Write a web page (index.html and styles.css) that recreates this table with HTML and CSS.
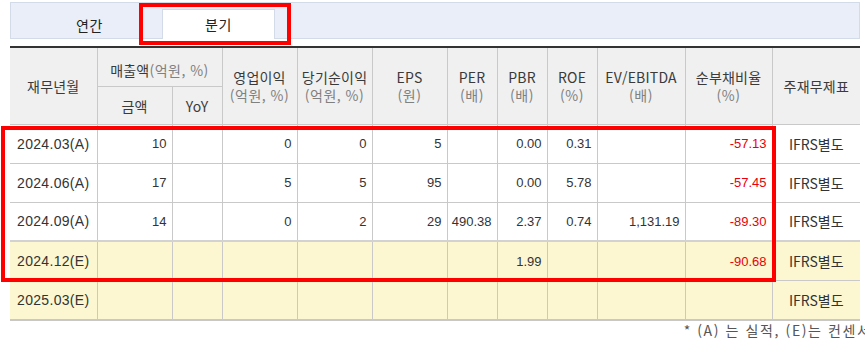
FILE: index.html
```html
<!DOCTYPE html>
<html lang="ko">
<head>
<meta charset="utf-8">
<title>재무 요약</title>
<link rel="stylesheet" href="styles.css">
</head>
<body>
<div class="page">
  <div class="tabs">
    <div class="tab">연간</div>
    <div class="tab active">분기</div>
  </div>
  <table class="fin">
    <colgroup>
      <col class="c87"><col class="c75"><col class="c50"><col class="c75"><col class="c75"><col class="c75">
      <col class="c50"><col class="c50"><col class="c50"><col class="c88"><col class="c87"><col class="c88">
    </colgroup>
    <thead>
      <tr class="h1">
        <th rowspan="2">재무년월</th>
        <th colspan="2" class="grp">매출액<span class="unit">(억원, %)</span></th>
        <th rowspan="2">영업이익<br><span class="unit">(억원, %)</span></th>
        <th rowspan="2">당기순이익<br><span class="unit">(억원, %)</span></th>
        <th rowspan="2">EPS<br><span class="unit">(원)</span></th>
        <th rowspan="2">PER<br><span class="unit">(배)</span></th>
        <th rowspan="2">PBR<br><span class="unit">(배)</span></th>
        <th rowspan="2">ROE<br><span class="unit">(%)</span></th>
        <th rowspan="2">EV/EBITDA<br><span class="unit">(배)</span></th>
        <th rowspan="2">순부채비율<br><span class="unit">(%)</span></th>
        <th rowspan="2">주재무제표</th>
      </tr>
      <tr class="h2">
        <th>금액</th>
        <th>YoY</th>
      </tr>
    </thead>
    <tbody>
      <tr>
        <td class="date">2024.03(A)</td><td>10</td><td></td><td>0</td><td>0</td><td>5</td>
        <td></td><td>0.00</td><td>0.31</td><td></td><td class="neg">-57.13</td><td class="std">IFRS별도</td>
      </tr>
      <tr>
        <td class="date">2024.06(A)</td><td>17</td><td></td><td>5</td><td>5</td><td>95</td>
        <td></td><td>0.00</td><td>5.78</td><td></td><td class="neg">-57.45</td><td class="std">IFRS별도</td>
      </tr>
      <tr>
        <td class="date">2024.09(A)</td><td>14</td><td></td><td>0</td><td>2</td><td>29</td>
        <td>490.38</td><td>2.37</td><td>0.74</td><td>1,131.19</td><td class="neg">-89.30</td><td class="std">IFRS별도</td>
      </tr>
      <tr class="est first">
        <td class="date">2024.12(E)</td><td></td><td></td><td></td><td></td><td></td>
        <td></td><td>1.99</td><td></td><td></td><td class="neg">-90.68</td><td class="std">IFRS별도</td>
      </tr>
      <tr class="est last">
        <td class="date">2025.03(E)</td><td></td><td></td><td></td><td></td><td></td>
        <td></td><td></td><td></td><td></td><td></td><td class="std">IFRS별도</td>
      </tr>
    </tbody>
  </table>
  <div class="note"><span>* (A) 는 실적, (E)는 컨센서스</span></div>
</div>
<div class="mark mark-tab"></div>
<div class="mark mark-rows"></div>
</body>
</html>
```
FILE: styles.css
```css
html, body {
  margin: 0;
  padding: 0;
  background: #fff;
  overflow: hidden;
}
body {
  width: 865px;
  height: 342px;
  position: relative;
  font-family: "Noto Sans CJK KR", "Liberation Sans", sans-serif;
  color: #333;
}
.page {
  width: 850px;
  padding: 2px 0 0 10px;
}
.tabs {
  display: flex;
  align-items: flex-end;
  height: 35px;
  background: #e9eef8;
  border: 1px solid #d4dbe8;
  box-sizing: content-box;
  padding-left: 22px;
  gap: 16px;
}
.tab {
  width: 113px;
  height: 28px;
  display: flex;
  align-items: center;
  justify-content: center;
  font-size: 14px;
  color: #222;
  letter-spacing: 0.5px;
  box-sizing: border-box;
  margin-bottom: -1px;
  padding-bottom: 1px;
}
.tab.active {
  background: #fff;
  border: 1px solid #d4dbe8;
  border-bottom: none;
  height: 30px;
}
.fin {
  margin-top: 7px;
  width: 850px;
  table-layout: fixed;
  border-collapse: collapse;
  border-top: 2px solid #333;
}
.c87 { width: 87px; }
.c75 { width: 75px; }
.c50 { width: 50px; }
.c88 { width: 88px; }
.fin th {
  background: #f0f0f0;
  font-weight: 400;
  font-size: 14px;
  line-height: 18px;
  letter-spacing: 0.2px;
  color: #3a3a3a;
  border: 1px solid #c9c9c9;
  border-top: none;
  padding: 0;
  text-align: center;
  vertical-align: middle;
  white-space: nowrap;
}
.fin th:first-child { border-left: none; }
.fin th:last-child { border-right: none; }
.fin tr.h1 th { height: 38px; }
.fin tr.h2 th { height: 37px; }
.fin tr.h1 th.grp {
  vertical-align: bottom;
  line-height: 32px;
}
.unit { color: #808080; letter-spacing: 0.5px; }
.fin td {
  height: 37.75px;
  border: 1px solid #c9c9c9;
  padding: 0 5px 0 0;
  text-align: right;
  font-family: "Liberation Sans", Arial, sans-serif;
  font-size: 13px;
  color: #333;
  white-space: nowrap;
}
.fin td:first-child { border-left: none; }
.fin td:last-child { border-right: none; }
.fin td.date {
  text-align: center;
  padding: 0;
  font-size: 14px;
  letter-spacing: 0.3px;
}
.fin td.neg { color: #e8000b; }
.fin td.std {
  text-align: center;
  padding: 0;
  font-family: "Noto Sans CJK KR", "Liberation Sans", sans-serif;
  font-size: 14px;
  color: #333;
}
.fin tr.est td { background: #fcf7d0; }
.fin tr.est.first td { border-top: 2px solid #d2d2d2; }
.fin tr.est.last td { border-bottom: 2px solid #c8c8c8; }
.note {
  display: flex;
  justify-content: flex-end;
  margin: 1px -26px 0 0;
  font-size: 14px;
  line-height: 17px;
  letter-spacing: 1.6px;
  color: #555;
  white-space: nowrap;
}
.mark {
  position: absolute;
  border: 4px solid #ff0000;
  box-sizing: border-box;
  pointer-events: none;
}
.mark-tab {
  left: 139px;
  top: 3px;
  width: 152px;
  height: 42px;
}
.mark-rows {
  left: 1px;
  top: 126px;
  width: 775px;
  height: 156px;
}
```
